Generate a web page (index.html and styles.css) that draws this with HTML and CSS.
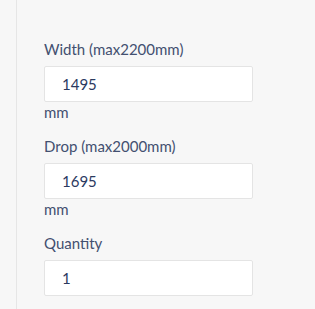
FILE: index.html
```html
<!DOCTYPE html>
<html lang="en">
<head>
  <meta charset="UTF-8">
  <title>Blind size</title>
  <link rel="stylesheet" href="styles.css">
</head>
<body>
  <div class="panel">
    <p class="intro">Enter sizes (use recess sizing)</p>

    <div class="field">
      <label for="width">Width (max2200mm)</label>
      <input type="number" id="width" value="1495">
      <span class="unit">mm</span>
    </div>

    <div class="field">
      <label for="drop">Drop (max2000mm)</label>
      <input type="number" id="drop" value="1695">
      <span class="unit">mm</span>
    </div>

    <div class="field">
      <label for="qty">Quantity</label>
      <input type="number" id="qty" value="1">
    </div>
  </div>
</body>
</html>
```

FILE: styles.css
```css
body {
  margin: 0;
  background: #f7f7f7;
  font-family: Lato, "Noto Sans", sans-serif;
  font-size: 15px;
  color: #435070;
}
.panel {
  margin-left: 16px;
  border-left: 1px solid #e6e6e6;
  padding-left: 27px;
  height: 309px;
  overflow: hidden;
}
.intro {
  margin: -19px 0 38px;
  line-height: 20px;
}
.field {
  margin-bottom: 14px;
}
.field label {
  display: block;
  line-height: 20px;
  margin-bottom: 7px;
}
.field input {
  display: block;
  box-sizing: border-box;
  width: 209px;
  height: 36px;
  padding: 0 17px;
  border: 1px solid #e4e4e4;
  border-radius: 2px;
  background: #fff;
  font-family: inherit;
  font-size: 15px;
  color: #2b3a5f;
  -moz-appearance: textfield;
}
.field input::-webkit-outer-spin-button,
.field input::-webkit-inner-spin-button {
  -webkit-appearance: none;
  margin: 0;
}
.unit {
  display: block;
  line-height: 20px;
}
```
